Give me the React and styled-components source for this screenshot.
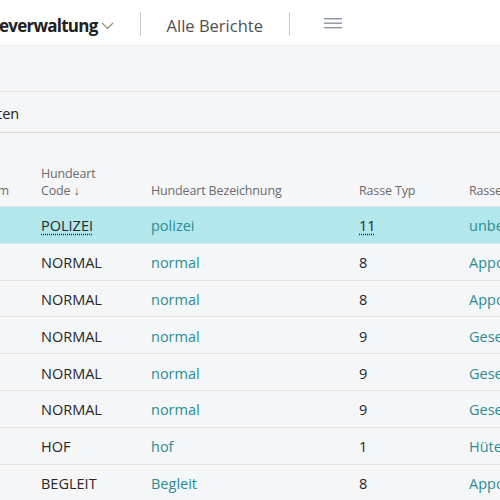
import styled, { createGlobalStyle } from 'styled-components';

const GlobalStyle = createGlobalStyle`
  html, body {
    margin: 0;
    padding: 0;
    background: #f5f6f8;
    overflow: hidden;
  }
  body {
    font-family: "Open Sans", "Noto Sans", sans-serif;
  }
`

const Page = styled.div`
  width: 500px;
  height: 500px;
  overflow: hidden;
  background: #f5f6f8;
`

const TopBar = styled.div`
  height: 46px;
  background: #ffffff;
  border-bottom: 1px solid #ececec;
  display: flex;
  align-items: center;
  box-sizing: border-box;
  padding-top: 7px;
`

const Title = styled.div`
  display: flex;
  align-items: center;
  font-size: 17px;
  font-weight: 700;
  letter-spacing: -0.75px;
  color: #212121;
  margin-left: -1px;
  padding-bottom: 2px;
`

const Chevron = styled.svg`
  margin-left: 3px;
  margin-top: 2px;
`

const Divider = styled.div`
  width: 1px;
  height: 24px;
  background: #c9ccd1;
  margin: -5px 26px 0;
`

const NavLink = styled.div`
  font-size: 16.5px;
  color: #505050;
  padding-bottom: 2px;
`

const Burger = styled.svg`
  margin-left: 8px;
  margin-top: -5px;
`

const ActionBar = styled.div`
  height: 45px;
  border-bottom: 1px solid #e1e1e1;
`

const FilterBar = styled.div`
  height: 41px;
  border-bottom: 1px solid #dcdcdc;
  display: flex;
  align-items: center;
  margin-left: -3px;
  padding-top: 3px;
  box-sizing: border-box;
  font-size: 14.5px;
  color: #212121;
`

const Grid = styled.div`
  display: grid;
  grid-template-columns: 71px 110px 208px 110px 1fr;
  margin-left: -30px;
  margin-top: 32px;
`

const HeadCell = styled.div`
  font-size: 12.5px;
  color: #6b6b6b;
  line-height: 17px;
  letter-spacing: -0.15px;
  display: flex;
  flex-direction: column;
  justify-content: flex-end;
  padding-bottom: 7px;
  white-space: nowrap;
  border-bottom: 1px solid #e1e1e1;
`

const Row = styled.div`
  display: contents;
`

const Cell = styled.div`
  height: 36.8px;
  box-sizing: border-box;
  display: flex;
  align-items: center;
  font-size: 14.5px;
  white-space: nowrap;
  overflow: hidden;
  color: ${p => (p.$link ? '#2b8d93' : '#262626')};
  background: ${p => (p.$selected ? '#b2e8eb' : 'transparent')};
  border-bottom: 1px solid ${p => (p.$selected ? '#cdeef0' : '#e3e3e3')};
  padding-top: 2px;
`

const Focus = styled.span`
  text-decoration: underline dotted;
  text-underline-offset: 2px;
`

const rows = [
  { code: 'POLIZEI', desc: 'polizei', typ: '11', rasse: 'unbekannt', selected: true },
  { code: 'NORMAL', desc: 'normal', typ: '8', rasse: 'Apportierhunde' },
  { code: 'NORMAL', desc: 'normal', typ: '8', rasse: 'Apportierhunde' },
  { code: 'NORMAL', desc: 'normal', typ: '9', rasse: 'Gesellschaftshunde' },
  { code: 'NORMAL', desc: 'normal', typ: '9', rasse: 'Gesellschaftshunde' },
  { code: 'NORMAL', desc: 'normal', typ: '9', rasse: 'Gesellschaftshunde' },
  { code: 'HOF', desc: 'hof', typ: '1', rasse: 'Hütehunde' },
  { code: 'BEGLEIT', desc: 'Begleit', typ: '8', rasse: 'Apportierhunde' },
]

const App = () => {
  return (
    <Page>
      <GlobalStyle />
      <TopBar>
        <Title>
          everwaltung
          <Chevron width="13" height="8" viewBox="0 0 13 8">
            <path d="M1 1l5.5 5.5L12 1" fill="none" stroke="#8a8a8a" strokeWidth="1.1" />
          </Chevron>
        </Title>
        <Divider />
        <NavLink>Alle Berichte</NavLink>
        <Divider />
        <Burger width="18" height="11" viewBox="0 0 18 11">
          <rect x="0" y="0" width="18" height="1.4" fill="#8c93a0" />
          <rect x="0" y="4.5" width="18" height="1.4" fill="#8c93a0" />
          <rect x="0" y="9" width="18" height="1.4" fill="#8c93a0" />
        </Burger>
      </TopBar>
      <ActionBar />
      <FilterBar>ten</FilterBar>
      <Grid>
        <HeadCell>Datum</HeadCell>
        <HeadCell>
          <span>Hundeart</span>
          <span>Code ↓</span>
        </HeadCell>
        <HeadCell>Hundeart Bezeichnung</HeadCell>
        <HeadCell>Rasse Typ</HeadCell>
        <HeadCell>Rasse Bezeichnung</HeadCell>
        {rows.map((r, i) => (
          <Row key={i}>
            <Cell $selected={r.selected} />
            <Cell $selected={r.selected}>{r.selected ? <Focus>{r.code}</Focus> : r.code}</Cell>
            <Cell $selected={r.selected} $link>{r.desc}</Cell>
            <Cell $selected={r.selected}>{r.selected ? <Focus>{r.typ}</Focus> : r.typ}</Cell>
            <Cell $selected={r.selected} $link>{r.rasse}</Cell>
          </Row>
        ))}
      </Grid>
    </Page>
  )
}

export default App
